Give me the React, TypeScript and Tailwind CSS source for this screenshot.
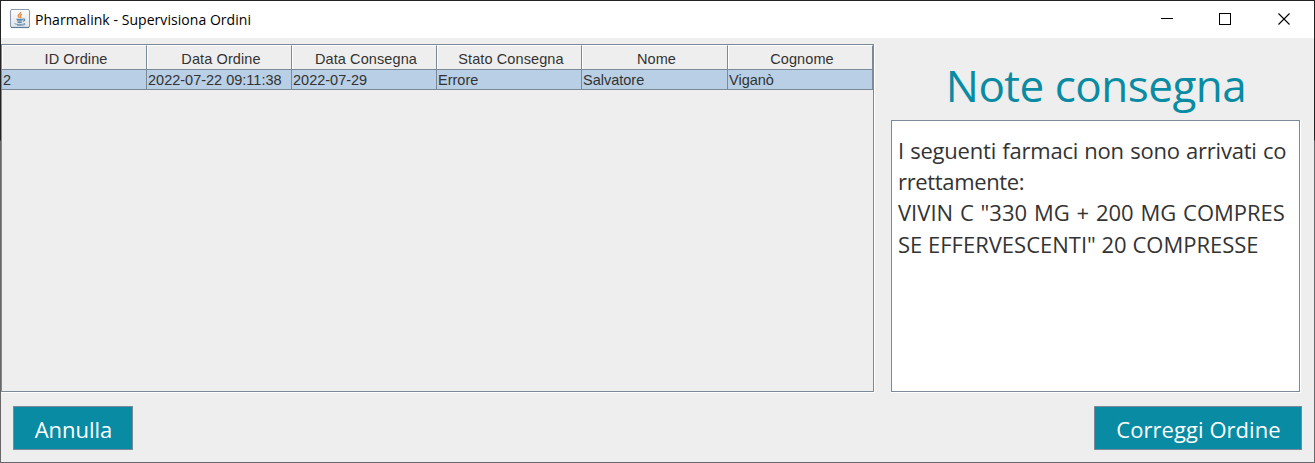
import React from 'react';

const columns = [
  { title: 'ID Ordine', value: '2', width: 'w-[145px]' },
  { title: 'Data Ordine', value: '2022-07-22 09:11:38', width: 'w-[145px]' },
  { title: 'Data Consegna', value: '2022-07-29', width: 'w-[145px]' },
  { title: 'Stato Consegna', value: 'Errore', width: 'w-[145px]' },
  { title: 'Nome', value: 'Salvatore', width: 'w-[146px]' },
  { title: 'Cognome', value: 'Viganò', width: 'w-[145px]' },
];

function JavaIcon() {
  return (
    <svg width="20" height="20" viewBox="0 0 20 20" className="block">
      <defs>
        <linearGradient id="tile" x1="0" y1="0" x2="0" y2="1">
          <stop offset="0" stopColor="#fdfdfd" />
          <stop offset="1" stopColor="#dfe3e8" />
        </linearGradient>
      </defs>
      <rect x="0.5" y="0.5" width="19" height="18" rx="1.5" fill="url(#tile)" stroke="#8b9bad" />
      <path d="M1 18.5h18" stroke="#617c96" strokeWidth="1.2" />
      <path d="M10.700 3c.5 1.600-2.600 2.200-2.500 3.800.1 1 1 1.200 1.300 2.200M12 5.300c-1.600.7-2.200 1.300-1.400 2.300.4.600.3 1.100-.2 1.600" fill="none" stroke="#e8914f" strokeWidth="1.500" />
      <path d="M6.500 10.100c1.500.6 4.500.5 6.500 0M7 11.700c1.500.5 4 .5 5.500 0M7.500 13.200c1.300.4 3 .4 4.300 0M13 10.100c2.300-.6 2.300 1.600.1 2.200" fill="none" stroke="#5d88ad" strokeWidth="1.200" />
      <path d="M4.500 14.600c2.500 1.300 8 1.200 10.500-.1M7 16.200c2.500.3 6.500.1 8.300-.8" fill="none" stroke="#7798b5" strokeWidth="1" />
    </svg>
  );
}

function TitleBar() {
  return (
    <header className="flex h-[37px] shrink-0 items-start bg-white pl-[9px]">
      <div className="pt-2"><JavaIcon /></div>
      <h1 className="pl-[5px] pt-[9px] font-['Open_Sans',sans-serif] text-[14px] leading-5 tracking-[0.05px] whitespace-nowrap text-black">
        Pharmalink - Supervisiona Ordini
      </h1>
      <div className="ml-auto flex gap-[46px] pt-3 pr-[23px]">
        <svg width="13" height="13" shapeRendering="crispEdges"><path d="M1 5.500h12" stroke="#000" /></svg>
        <svg width="13" height="13" shapeRendering="crispEdges"><rect x="0.500" y="0.500" width="11" height="11" fill="none" stroke="#000" /></svg>
        <svg width="13" height="13"><path d="M0.500 0.500l11 11M11.500 0.500l-11 11" stroke="#000" strokeWidth="1.100" /></svg>
      </div>
    </header>
  );
}

function OrdersTable() {
  return (
    <section className="flex h-[349px] w-[874px] shrink-0 border-r border-b border-white">
      <div className="flex w-[873px] flex-col border border-[#7a8a99] font-['Liberation_Sans',Arial,sans-serif] text-[14.5px] text-[#333333]">
        <div className="flex h-[25px] border-b border-[#7a8a99]">
          {columns.map((c) => (
            <div key={c.title} className={`${c.width} shrink-0 border-t border-r border-l border-t-white border-r-[#7a8a99] border-l-white pt-[3px] pl-[3px] text-center leading-5 tracking-[0.1px] whitespace-nowrap`}>
              {c.title}
            </div>
          ))}
        </div>
        <div className="flex h-5 border-b border-[#7a8a99] bg-[#b8cfe5]">
          {columns.map((c) => (
            <div key={c.title} className={`${c.width} shrink-0 border-r border-[#7a8a99] pl-px leading-5 whitespace-nowrap`}>
              {c.value}
            </div>
          ))}
        </div>
      </div>
    </section>
  );
}

function Notes() {
  return (
    <section className="flex flex-col font-['Open_Sans',sans-serif]">
      <h2 className="flex h-[76px] items-center justify-center pt-[5px] text-[44px] leading-[60px] font-normal tracking-[-0.5px] whitespace-nowrap text-[#088ba3]">
        Note consegna
      </h2>
      <div className="h-[273px] w-[410px] border-r border-b border-white">
        <div className="h-[272px] border border-[#7a8a99] bg-white pt-[14px] pl-1.5 text-[22px] leading-[31.2px] whitespace-nowrap text-[#333333]">
          <p className="tracking-[-0.22px] [word-spacing:0.8px]">I seguenti farmaci non sono arrivati co</p>
          <p className="tracking-[-0.35px]">rrettamente:</p>
          <p className="[word-spacing:1.1px]">VIVIN C "330 MG + 200 MG COMPRES</p>
          <p>SE EFFERVESCENTI" 20 COMPRESSE</p>
        </div>
      </div>
    </section>
  );
}

export default function App() {
  return (
    <div className="h-[463px] w-[1315px] overflow-hidden bg-[linear-gradient(to_bottom,#232323_140px,#68686a_141px)] p-px">
      <div className="flex h-[461px] flex-col bg-[#eeeeee]">
        <TitleBar />
        <main className="flex gap-4 pt-[6px]">
          <OrdersTable />
          <Notes />
        </main>
        <footer className="flex justify-between pt-[13px] pr-3 pl-3 font-['Open_Sans',sans-serif] text-[22px] text-white">
          <button className="h-11 w-[120px] border border-[#7a8a99] bg-[#088ba3] pt-px pl-[1px] leading-[38px]">Annulla</button>
          <button className="h-11 w-[208px] border border-[#7a8a99] bg-[#088ba3] pt-px pl-[1px] leading-[38px] tracking-[0.05px]">Correggi Ordine</button>
        </footer>
      </div>
    </div>
  );
}
